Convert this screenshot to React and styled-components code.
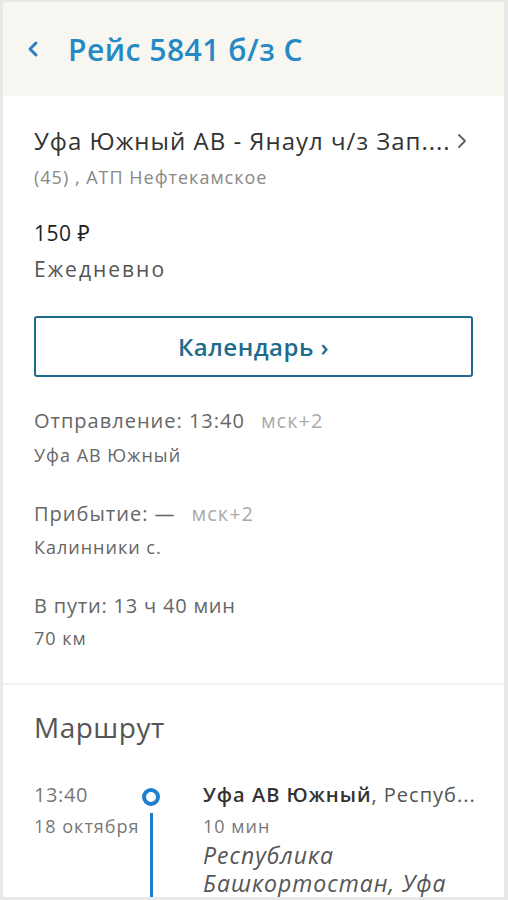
import styled, { createGlobalStyle } from "styled-components";

const Global = createGlobalStyle`
  html, body {
    margin: 0;
    padding: 0;
    background: #fff;
    overflow: hidden;
  }
  * { box-sizing: border-box; }
`;

const Frame = styled.div`
  width: 508px;
  height: 900px;
  overflow: hidden;
  border-style: solid;
  border-color: #e9e9e9;
  border-width: 2px 4px 3px 3px;
  font-family: "Open Sans", "Noto Sans", sans-serif;
  background: #fff;
`;

const Header = styled.header`
  height: 94px;
  background: #f7f6f1;
  display: flex;
  align-items: center;
  padding-left: 23px;
  gap: 28px;
`;

const Back = styled.svg`
  width: 14px;
  height: 18px;
  flex: none;
`;

const HeaderTitle = styled.h1`
  margin: 0;
  font-size: 30px;
  font-weight: 600;
  letter-spacing: 0.5px;
  color: #2489c5;
`;

const Section = styled.section`
  padding: ${(p) => p.$pad};
  border-top: ${(p) => (p.$divider ? "2px solid #f1f1f1" : "none")};
`;

const RouteHead = styled.div`
  display: flex;
  align-items: center;
  gap: 6px;
`;

const RouteName = styled.div`
  font-size: 24px;
  letter-spacing: 1px;
  color: #333;
  white-space: nowrap;
`;

const Chevron = styled.svg`
  width: 10px;
  height: 16px;
  flex: none;
`;

const Text = styled.div`
  font-size: ${(p) => p.$size}px;
  color: ${(p) => p.$color || "#666"};
  margin-top: ${(p) => p.$top || 0}px;
  letter-spacing: ${(p) => (p.$ls === undefined ? 1 : p.$ls)}px;
  white-space: nowrap;
`;

const CalendarButton = styled.button`
  display: block;
  width: 439px;
  height: 61px;
  margin-top: 33px;
  border: 2px solid #1f6b8d;
  border-radius: 3px;
  background: #fff;
  font-family: inherit;
  font-size: 24px;
  font-weight: 600;
  letter-spacing: 0.5px;
  color: #1f6b8d;
  cursor: pointer;
`;

const Tz = styled.span`
  color: #aaa;
  margin-left: 16px;
`;

const SectionTitle = styled.h2`
  margin: 0;
  font-size: 28px;
  font-weight: 400;
  letter-spacing: 0.5px;
  color: #555;
`;

const Stop = styled.div`
  display: grid;
  grid-template-columns: 108px 61px 1fr;
  margin-top: 35px;
`;

const Track = styled.div`
  width: 18px;
  display: flex;
  flex-direction: column;
  align-items: center;
  padding-top: 7px;
`;

const Dot = styled.div`
  width: 18px;
  height: 18px;
  border-radius: 50%;
  border: 4px solid #1f7fcf;
`;

const Line = styled.div`
  width: 3px;
  height: 120px;
  background: #1f7fcf;
  margin-top: 7px;
`;

const StopName = styled.div`
  font-size: 20px;
  letter-spacing: 1px;
  color: #555;
  white-space: nowrap;
`;

const Strong = styled.span`
  font-weight: 600;
  color: #333;
`;

const Address = styled.div`
  font-size: 23px;
  font-style: italic;
  letter-spacing: 1px;
  color: #555;
  line-height: 28px;
  max-width: 260px;
  margin-top: 3px;
`;

const ArrowLeft = () => (
  <Back viewBox="0 0 14 18">
    <path d="M10 3 L4 9 L10 15" fill="none" stroke="#2d7fc1" strokeWidth="3" strokeLinecap="round" strokeLinejoin="round" />
  </Back>
);

const ArrowRight = () => (
  <Chevron viewBox="0 0 10 16">
    <path d="M2 2 L8 8 L2 14" fill="none" stroke="#666" strokeWidth="2" strokeLinecap="round" strokeLinejoin="round" />
  </Chevron>
);

export default function App() {
  return (
    <>
      <Global />
      <Frame>
        <Header>
          <ArrowLeft />
          <HeaderTitle>Рейс 5841 б/з С</HeaderTitle>
        </Header>

        <Section $pad="28px 31px 33px">
          <RouteHead>
            <RouteName>Уфа Южный АВ - Янаул ч/з Зап....</RouteName>
            <ArrowRight />
          </RouteHead>
          <Text $size={18} $color="#888" $top={8}>(45) , АТП Нефтекамское</Text>
          <Text $size={21} $color="#222" $top={30} $ls={0.5}>150 ₽</Text>
          <Text $size={21} $color="#555" $top={8} $ls={2}>Ежедневно</Text>
          <CalendarButton>Календарь ›</CalendarButton>

          <Text $size={20} $top={30}>Отправление: 13:40<Tz>мск+2</Tz></Text>
          <Text $size={18} $top={9}>Уфа АВ Южный</Text>

          <Text $size={20} $top={33}>Прибытие: —<Tz>мск+2</Tz></Text>
          <Text $size={18} $top={8}>Калинники с.</Text>

          <Text $size={20} $top={33} $ls={0.8}>В пути: 13 ч 40 мин</Text>
          <Text $size={18} $top={7}>70 км</Text>
        </Section>

        <Section $divider $pad="23px 31px 0">
          <SectionTitle>Маршрут</SectionTitle>
          <Stop>
            <div>
              <Text $size={20} $color="#777" $ls={0.6}>13:40</Text>
              <Text $size={18} $color="#777" $top={6}>18 октября</Text>
            </div>
            <Track>
              <Dot />
              <Line />
            </Track>
            <div>
              <StopName><Strong>Уфа АВ Южный</Strong>, Респуб...</StopName>
              <Text $size={18} $color="#777" $top={6}>10 мин</Text>
              <Address>Республика Башкортостан, Уфа</Address>
            </div>
          </Stop>
        </Section>
      </Frame>
    </>
  );
}
